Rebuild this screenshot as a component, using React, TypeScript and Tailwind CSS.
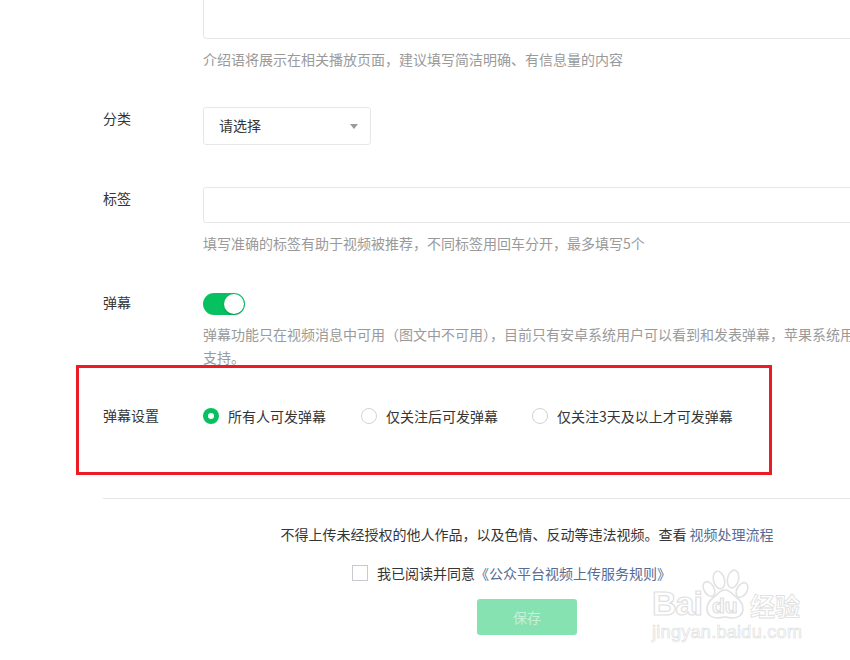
const hintClass = 'text-sm leading-[23px] text-[#9a9a9a]'
const labelClass = 'w-[100px] shrink-0 text-sm leading-5 text-[#353535]'
const outlineClass = "absolute font-['Liberation_Sans',sans-serif] font-bold text-white [-webkit-text-stroke:1.2px_#e0e0e0]"

function Radio({ checked, label, className }: { checked?: boolean; label: string; className?: string }) {
  return (
    <div className={`flex items-center gap-[9px] ${className ?? ''}`}>
      {checked ? (
        <span className="flex h-4 w-4 items-center justify-center rounded-full bg-[#07c160]">
          <span className="h-1.5 w-1.5 rounded-full bg-white" />
        </span>
      ) : (
        <span className="h-4 w-4 rounded-full border border-[#d3d3d3]" />
      )}
      <span className="text-sm leading-5 text-[#353535]">{label}</span>
    </div>
  )
}

function Watermark() {
  return (
    <div className="absolute left-[650px] top-[566px] h-[80px] w-[156px] select-none">
      <svg className="absolute left-0 top-0" width="156" height="60" viewBox="0 0 156 60" fill="none" stroke="#e2e2e2" strokeWidth="1.6">
        <ellipse cx="69" cy="14" rx="5.5" ry="9" transform="rotate(-15 69 14)" />
        <ellipse cx="83" cy="13" rx="5.5" ry="9" transform="rotate(12 83 13)" />
        <ellipse cx="59" cy="23" rx="5" ry="8" transform="rotate(-30 59 23)" />
        <ellipse cx="92" cy="24" rx="5" ry="8" transform="rotate(30 92 24)" />
        <path d="M75 24c-5 0-7 4-11 7-4 3-7 7-7 12 0 6 5 9 10 9 4 0 6-1 8-1s4 1 8 1c5 0 10-3 10-9 0-5-3-9-7-12-4-3-6-7-11-7z" />
      </svg>
      <span className={`${outlineClass} left-[2px] top-[18px] text-[34px] leading-[38px] tracking-[-1px]`}>
        Bai
      </span>
      <span className={`${outlineClass} left-[62px] top-[28px] text-[21px] leading-6`}>
        du
      </span>
      <span className="absolute left-[100px] top-[25px] text-[25px] font-bold leading-7 text-white [-webkit-text-stroke:0.8px_#dedede]">
        经验
      </span>
      <span className="absolute left-[2px] top-[56px] whitespace-nowrap font-['Liberation_Sans',sans-serif] text-[18px] leading-5 tracking-[0.3px] text-white [-webkit-text-stroke:0.7px_#e0e0e0]">
        jingyan.baidu.com
      </span>
    </div>
  )
}

export default function App() {
  return (
    <div
      lang="zh-CN"
      className="relative h-[660px] w-[850px] overflow-hidden bg-white pl-[103px] font-['Noto_Sans_CJK_SC','Noto_Sans',sans-serif]"
    >
      <div className="w-[848px]">
        <div className="ml-[100px] w-[700px]">
          <div className="h-[39px] rounded-b border border-t-0 border-[#e4e8eb]" />
          <p className={`mt-[9px] ${hintClass}`}>
            介绍语将展示在相关播放页面，建议填写简洁明确、有信息量的内容
          </p>
        </div>

        <div className="mt-[36px] flex">
          <div className={`${labelClass} pt-px`}>分类</div>
          <div className="flex h-[38px] w-[168px] items-center justify-between rounded-[3px] border border-[#e4e8eb] pl-[15px] pr-3">
            <span className="-mt-0.5 text-sm text-[#353535]">请选择</span>
            <span className="mt-px h-0 w-0 border-x-4 border-t-[5px] border-x-transparent border-t-[#9a9a9a]" />
          </div>
        </div>

        <div className="mt-[42px] flex">
          <div className={`${labelClass} pt-px`}>标签</div>
          <div className="w-[700px]">
            <div className="h-[36px] rounded-[3px] border border-[#e4e8eb]" />
            <p className={`mt-[9px] ${hintClass}`}>
              填写准确的标签有助于视频被推荐，不同标签用回车分开，最多填写5个
            </p>
          </div>
        </div>

        <div className="mt-[38px] flex">
          <div className={`${labelClass} -mt-px`}>弹幕</div>
          <div className="w-[704px]">
            <div className="flex h-[22px] w-[42px] items-center justify-end rounded-full bg-[#07c160] pr-px">
              <span className="h-5 w-5 rounded-full bg-white shadow-[0_1px_2px_rgba(0,0,0,0.25)]" />
            </div>
            <p className={`mt-[8px] ${hintClass}`}>
              弹幕功能只在视频消息中可用（图文中不可用），目前只有安卓系统用户可以看到和发表弹幕，苹果系统用户暂不支持。
            </p>
          </div>
        </div>

        <div className="mt-[36px] flex">
          <div className={labelClass}>弹幕设置</div>
          <div className="mt-px flex gap-[35px]">
            <Radio checked label="所有人可发弹幕" />
            <Radio label="仅关注后可发弹幕" />
            <Radio label="仅关注3天及以上才可发弹幕" className="-ml-px" />
          </div>
        </div>

        <div className="mt-[72px] border-t border-[#e7e7e7]" />

        <p className="mt-[25px] text-center text-sm leading-5 text-[#353535]">
          不得上传未经授权的他人作品，以及色情、反动等违法视频。查看 <span className="text-[#576b95]">视频处理流程</span>
        </p>

        <div className="mt-[19px] flex items-center gap-[9px] pl-[249px]">
          <span className="h-4 w-4 border border-[#c9c9d2]" />
          <span className="text-sm leading-5 text-[#353535]">
            我已阅读并同意<span className="text-[#576b95]">《公众平台视频上传服务规则》</span>
          </span>
        </div>

        <div className="mt-4 flex justify-center">
          <div className="flex h-9 w-[100px] items-center justify-center rounded-[3px] bg-[#87e2b1] text-sm text-[#c5f0d9]">
            保存
          </div>
        </div>
      </div>

      <div className="pointer-events-none absolute left-[76px] top-[365px] h-[110px] w-[696px] border-[3px] border-[#ed1c24]" />
      <Watermark />
    </div>
  )
}
